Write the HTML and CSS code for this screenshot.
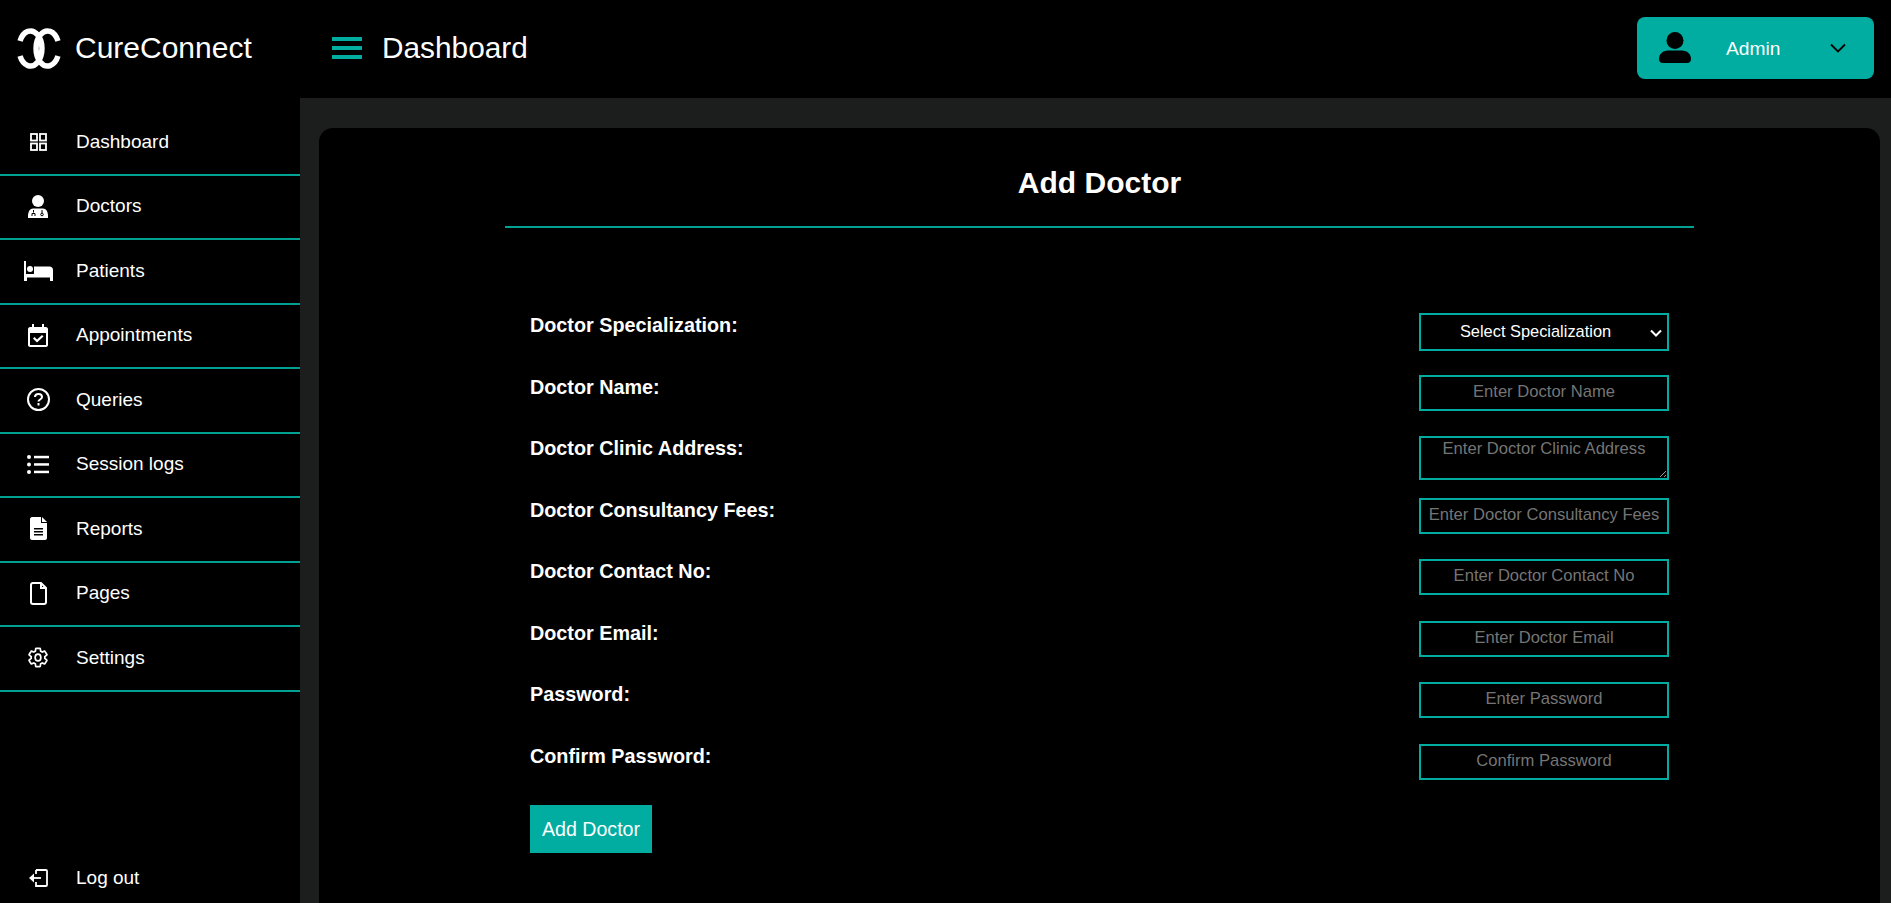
FILE: index.html
```html
<!DOCTYPE html>
<html lang="en">
<head>
    <meta charset="UTF-8">
    <title>CureConnect - Add Doctor</title>
    <link rel="stylesheet" href="styles.css">
</head>
<body>
    <!-- top bar -->
    <header class="topbar">
        <div class="brand">
            <svg class="brand-logo" viewBox="0 0 44 41" fill="none" stroke="#fff" stroke-width="5.500">
                <path d="M3.050 13A11.500 17.500 0 1 1 3.050 28"/>
                <path d="M40.950 13A11.500 17.500 0 1 0 40.950 28"/>
            </svg>
            <span class="brand-name">CureConnect</span>
        </div>
        <div class="menu-btn"><span></span><span></span><span></span></div>
        <div class="page-title">Dashboard</div>
        <div class="user-btn">
            <svg class="user-icon" viewBox="0 0 32 32" fill="#000">
                <circle cx="16" cy="8.500" r="8.500"/>
                <path d="M0 27c0-5 4-8.500 9-8.500h14c5 0 9 3.500 9 8.500 0 2-1 4-4 4H4c-3 0-4-2-4-4z"/>
            </svg>
            <span class="user-name">Admin</span>
            <svg class="user-caret" viewBox="0 0 16 10" fill="none" stroke="#000" stroke-width="1.800"><path d="M1 1.500l7 7 7-7"/></svg>
        </div>
    </header>

    <div class="layout">
        <!-- side menu -->
        <nav class="sidebar">
            <a class="nav-item" href="#">
                <span class="nav-icon"><svg width="17" height="18" viewBox="0 0 17 18" fill="none" stroke="#fff" stroke-width="1.800"><rect x="1" y="1" width="6" height="6.500"/><rect x="10" y="1" width="6" height="6.500"/><rect x="1" y="10.500" width="6" height="6.500"/><rect x="10" y="10.500" width="6" height="6.500"/></svg></span>
                Dashboard
            </a>
            <a class="nav-item" href="#">
                <span class="nav-icon"><svg width="20" height="23" viewBox="0 0 20 23" fill="#fff"><circle cx="10" cy="6" r="6"/><path d="M5 13.500h10c3 0 5 3 5 7.500v2H0v-2c0-4.500 2-7.500 5-7.500z"/><path d="M5.500 15v2.500M4 21v-2.500h3V21M14 15v3" fill="none" stroke="#000" stroke-width="1"/><circle cx="14" cy="19.500" r="1.300" fill="none" stroke="#000" stroke-width="1"/></svg></span>
                Doctors
            </a>
            <a class="nav-item" href="#">
                <span class="nav-icon"><svg width="29" height="20" viewBox="0 0 29 20" fill="#fff"><path d="M0 0h2v13h8V5.500h15.500c2 0 3.500 1.500 3.500 3.500v11h-3v-3.500H3V20H0z"/><circle cx="6" cy="8" r="3"/></svg></span>
                Patients
            </a>
            <a class="nav-item" href="#">
                <span class="nav-icon"><svg width="20" height="23" viewBox="0 0 20 23" fill="#fff"><path fill-rule="evenodd" d="M4 0h2v3h8V0h2v3h2c1 0 2 1 2 2v16c0 1-1 2-2 2H2c-1 0-2-1-2-2V5c0-1 1-2 2-2h2zM2 9v12h16V9z"/><path d="M5 14.500l1.500-1.500 2.500 2.500 5-4.500 1.500 1.500-6.500 6z"/></svg></span>
                Appointments
            </a>
            <a class="nav-item" href="#">
                <span class="nav-icon"><svg width="23" height="23" viewBox="0 0 23 23" fill="none" stroke="#fff" stroke-width="2"><circle cx="11.500" cy="11.500" r="10.500"/><path d="M8 9c0-2 1.500-3 3.500-3s3.500 1 3.500 3c0 2.500-3.500 2.500-3.500 4.500"/><path d="M11.500 15v2.500"/></svg></span>
                Queries
            </a>
            <a class="nav-item" href="#">
                <span class="nav-icon"><svg width="22" height="19" viewBox="0 0 22 19" fill="#fff"><circle cx="2" cy="2" r="2"/><circle cx="2" cy="9.500" r="2"/><circle cx="2" cy="17" r="2"/><rect x="7" y="0.800" width="15" height="2.500"/><rect x="7" y="8.200" width="15" height="2.500"/><rect x="7" y="15.700" width="15" height="2.500"/></svg></span>
                Session logs
            </a>
            <a class="nav-item" href="#">
                <span class="nav-icon"><svg width="17" height="23" viewBox="0 0 17 23" fill="#fff"><path fill-rule="evenodd" d="M2 0h9v6h6v15c0 1-1 2-2 2H2c-1 0-2-1-2-2V2c0-1 1-2 2-2zM4 11v1.500h9V11zM4 14v1.500h9V14zM4 17v1.500h9V17z"/><path d="M12 0l5 5h-5z"/></svg></span>
                Reports
            </a>
            <a class="nav-item" href="#">
                <span class="nav-icon"><svg width="17" height="23" viewBox="0 0 17 23" fill="none" stroke="#fff" stroke-width="2"><path d="M3 1h8l5 5v14c0 1-1 2-2 2H3c-1 0-2-1-2-2V3c0-1 1-2 2-2zM11 1v5h5"/></svg></span>
                Pages
            </a>
            <a class="nav-item" href="#">
                <span class="nav-icon"><svg width="20" height="21" viewBox="1.500 1.500 21 21" fill="none" stroke="#fff" stroke-width="1.800"><path d="M19.140 12.940c.04-.3.06-.61.06-.94 0-.32-.02-.64-.07-.94l2.030-1.580c.18-.14.23-.41.12-.61l-1.920-3.320c-.12-.22-.37-.29-.59-.22l-2.390.96c-.5-.38-1.030-.7-1.620-.94l-.36-2.540c-.04-.24-.24-.41-.48-.41h-3.840c-.24 0-.43.17-.47.41l-.36 2.540c-.59.24-1.130.57-1.620.94l-2.390-.96c-.22-.08-.47 0-.59.22L2.740 8.870c-.12.21-.08.47.12.61l2.030 1.580c-.05.3-.09.63-.09.94s.02.64.07.94l-2.030 1.580c-.18.14-.23.41-.12.61l1.920 3.320c.12.22.37.29.59.22l2.390-.96c.5.38 1.030.7 1.620.94l.36 2.540c.05.24.24.41.48.41h3.840c.24 0 .44-.17.47-.41l.36-2.540c.59-.24 1.130-.56 1.620-.94l2.390.96c.22.08.47 0 .59-.22l1.920-3.320c.12-.22.07-.47-.12-.61l-2.010-1.580z"/><ellipse cx="12" cy="12" rx="3" ry="3.600"/></svg></span>
                Settings
            </a>
            <a class="nav-item nav-logout" href="#">
                <span class="nav-icon"><svg width="19" height="18" viewBox="0 0 19 18" fill="none" stroke="#fff" stroke-width="1.800"><path d="M7 1h10c.6 0 1 .4 1 1v14c0 .6-.4 1-1 1H7v-4M7 1v4"/><path d="M3 9h9"/><path fill="#fff" stroke="none" d="M0 9l5-4.500v9z"/></svg></span>
                Log out
            </a>
        </nav>

        <!-- content -->
        <main class="content">
            <div class="card">
                <div class="form-wrap">
                    <h1 class="form-title">Add Doctor</h1>
                    <form class="doctor-form">
                        <div class="form-row">
                            <label>Doctor Specialization:</label>
                            <div class="select-wrap">
                                <select class="field field-select"><option>Select Specialization</option></select>
                                <svg class="select-arrow" viewBox="0 0 12 8" fill="none" stroke="#fff" stroke-width="2"><path d="M1 1.500l5 5 5-5"/></svg>
                            </div>
                        </div>
                        <div class="form-row">
                            <label>Doctor Name:</label>
                            <input class="field" type="text" placeholder="Enter Doctor Name">
                        </div>
                        <div class="form-row">
                            <label>Doctor Clinic Address:</label>
                            <textarea class="field field-area" placeholder="Enter Doctor Clinic Address"></textarea>
                        </div>
                        <div class="form-row">
                            <label>Doctor Consultancy Fees:</label>
                            <input class="field" type="text" placeholder="Enter Doctor Consultancy Fees">
                        </div>
                        <div class="form-row">
                            <label>Doctor Contact No:</label>
                            <input class="field" type="text" placeholder="Enter Doctor Contact No">
                        </div>
                        <div class="form-row">
                            <label>Doctor Email:</label>
                            <input class="field" type="text" placeholder="Enter Doctor Email">
                        </div>
                        <div class="form-row">
                            <label>Password:</label>
                            <input class="field" type="password" placeholder="Enter Password">
                        </div>
                        <div class="form-row">
                            <label>Confirm Password:</label>
                            <input class="field" type="password" placeholder="Confirm Password">
                        </div>
                        <button class="submit-btn" type="button">Add Doctor</button>
                    </form>
                </div>
            </div>
        </main>
    </div>
</body>
</html>
```

FILE: styles.css
```css
* {
    margin: 0;
    padding: 0;
    box-sizing: border-box;
}

html, body {
    height: 100%;
    overflow: hidden;
}

body {
    display: flex;
    flex-direction: column;
    background: #000;
    color: #fff;
    font-family: "Liberation Sans", Arial, sans-serif;
}

/* top bar */
.topbar {
    display: flex;
    align-items: center;
    height: 98px;
    flex-shrink: 0;
    padding: 0 17px 2px;
    background: #000;
}

.brand {
    display: flex;
    align-items: center;
    width: 315px;
}

.brand-logo {
    width: 44px;
    height: 41px;
}

.brand-name {
    margin-left: 14px;
    font-size: 30px;
}

.menu-btn {
    display: flex;
    flex-direction: column;
    justify-content: space-between;
    width: 30px;
    height: 22px;
}

.menu-btn span {
    display: block;
    height: 4px;
    background: #00ada0;
}

.page-title {
    margin-left: 20px;
    font-size: 29.800px;
}

.user-btn {
    display: flex;
    align-items: center;
    width: 237px;
    height: 62px;
    margin-left: auto;
    padding-left: 22px;
    background: #00ada0;
    border-radius: 8px;
}

.user-icon {
    width: 32px;
    height: 32px;
}

.user-name {
    margin-left: 35px;
    padding-top: 1px;
    font-size: 19.200px;
}

.user-caret {
    width: 16px;
    height: 10px;
    margin-left: 50px;
}

/* sidebar */
.layout {
    display: flex;
    flex: 1;
    min-height: 0;
}

.sidebar {
    display: flex;
    flex-direction: column;
    width: 300px;
    flex-shrink: 0;
    padding-top: 13px;
    background: #000;
}

.nav-item {
    display: flex;
    align-items: center;
    height: 64.500px;
    padding-left: 18px;
    padding-bottom: 1px;
    color: #fff;
    font-size: 19px;
    text-decoration: none;
    border-bottom: 2px solid #00a093;
}

.nav-icon {
    display: flex;
    justify-content: center;
    width: 40px;
    margin-right: 18px;
}

.nav-logout {
    height: 50px;
    margin-top: auto;
    border-bottom: none;
}

/* content */
.content {
    flex: 1;
    display: flex;
    padding: 30px 11px 0 19px;
    background: #1c1e1d;
}

.card {
    flex: 1;
    background: #000;
    border-radius: 14px 14px 0 0;
}

.form-wrap {
    width: 1189px;
    margin: 0 auto;
}

.form-title {
    padding-top: 38px;
    padding-bottom: 26px;
    font-size: 30px;
    line-height: 34px;
    text-align: center;
    border-bottom: 2px solid #00a093;
}

.doctor-form {
    padding: 85px 25px 0;
}

.form-row {
    display: flex;
    justify-content: space-between;
    align-items: flex-start;
    height: 61.500px;
}

.form-row label {
    font-size: 19.800px;
    font-weight: bold;
    line-height: 24px;
}

.field {
    width: 250px;
    height: 36px;
    padding: 0 5px 2px;
    color: #fff;
    background: #000;
    border: 2px solid #00ada0;
    border-radius: 0;
    outline: none;
    font-family: inherit;
    font-size: 16.600px;
    text-align: center;
}

.field::placeholder {
    color: #757575;
}

.select-wrap {
    position: relative;
    width: 250px;
    height: 38px;
}

.field-select {
    display: block;
    height: 38px;
    padding-right: 22px;
    appearance: none;
    font-size: 16.400px;
}

.select-arrow {
    position: absolute;
    top: 16px;
    right: 7px;
    width: 12px;
    height: 8px;
}

.field-area {
    display: block;
    height: 44px;
    padding: 1px 5px;
}

.submit-btn {
    display: block;
    width: 122px;
    height: 48px;
    color: #fff;
    background: #00ada0;
    border: none;
    font-family: inherit;
    font-size: 19.600px;
}
```
